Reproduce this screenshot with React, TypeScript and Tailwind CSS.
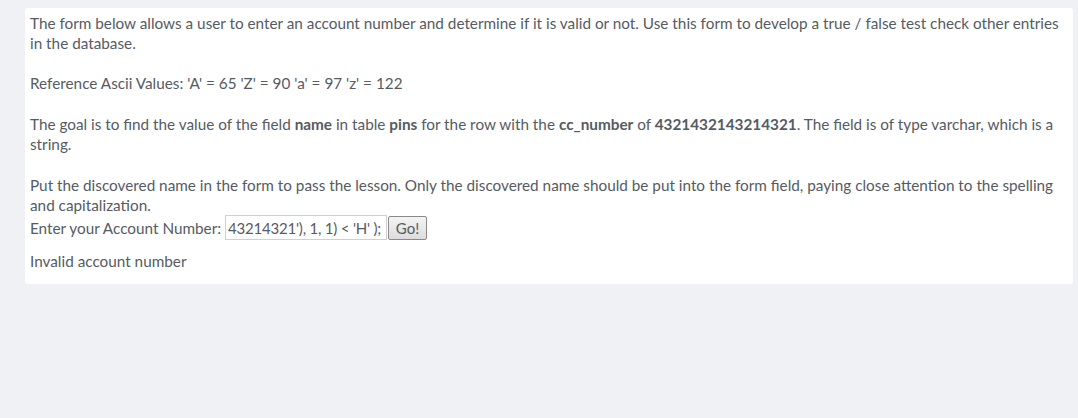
import React from "react";

export default function App() {
  return (
    <div className="min-h-[418px] w-[1078px] bg-[#f0f1f5] pt-[8px]" style={{ fontFamily: "Lato, 'Open Sans', sans-serif" }}>
      <div className="ml-[25px] w-[1048px] whitespace-nowrap rounded-[3px] bg-white pl-[5px] pr-[5px] pt-[5px] pb-[13px] text-[15.3px] leading-[20px] text-[#555b63]">
        <div>
          The form below allows a user to enter an account number and determine if it is valid or not. Use this form to develop a true / false test check other entries
          <br />
          in the database.
        </div>
        <div className="mt-[20px]">Reference Ascii Values: 'A' = 65 'Z' = 90 'a' = 97 'z' = 122</div>
        <div className="mt-[21px]">
          The goal is to find the value of the field <b>name</b> in table <b>pins</b> for the row with the <b>cc_number</b> of <b>4321432143214321</b>. The field is of type varchar, which is a
          <br />
          string.
        </div>
        <div className="mt-[21px]">
          Put the discovered name in the form to pass the lesson. Only the discovered name should be put into the form field, paying close attention to the spelling
          <br />
          and capitalization.
        </div>
        <div className="flex h-[25px] items-center">
          <span>Enter your Account Number:&nbsp;</span>
          <input
            readOnly
            value="43214321'), 1, 1) < 'H' );"
            className="h-[25px] w-[162px] border border-[#cfcfd4] bg-white pl-[2px] pr-0 text-[15px] tracking-[-0.2px] text-[#555b63] outline-none"
            style={{ fontFamily: "Lato, 'Open Sans', sans-serif" }}
          />
          <button
            className="ml-[1px] h-[24px] w-[39px] rounded-[2px] border border-[#8a8a8a] bg-gradient-to-b from-[#f4f4f4] to-[#dcdcdc] text-[15px] leading-[20px] text-[#555b63]"
            style={{ fontFamily: "Lato, 'Open Sans', sans-serif" }}
          >
            Go!
          </button>
        </div>
        <div className="mt-[11px]">Invalid account number</div>
      </div>
    </div>
  );
}
